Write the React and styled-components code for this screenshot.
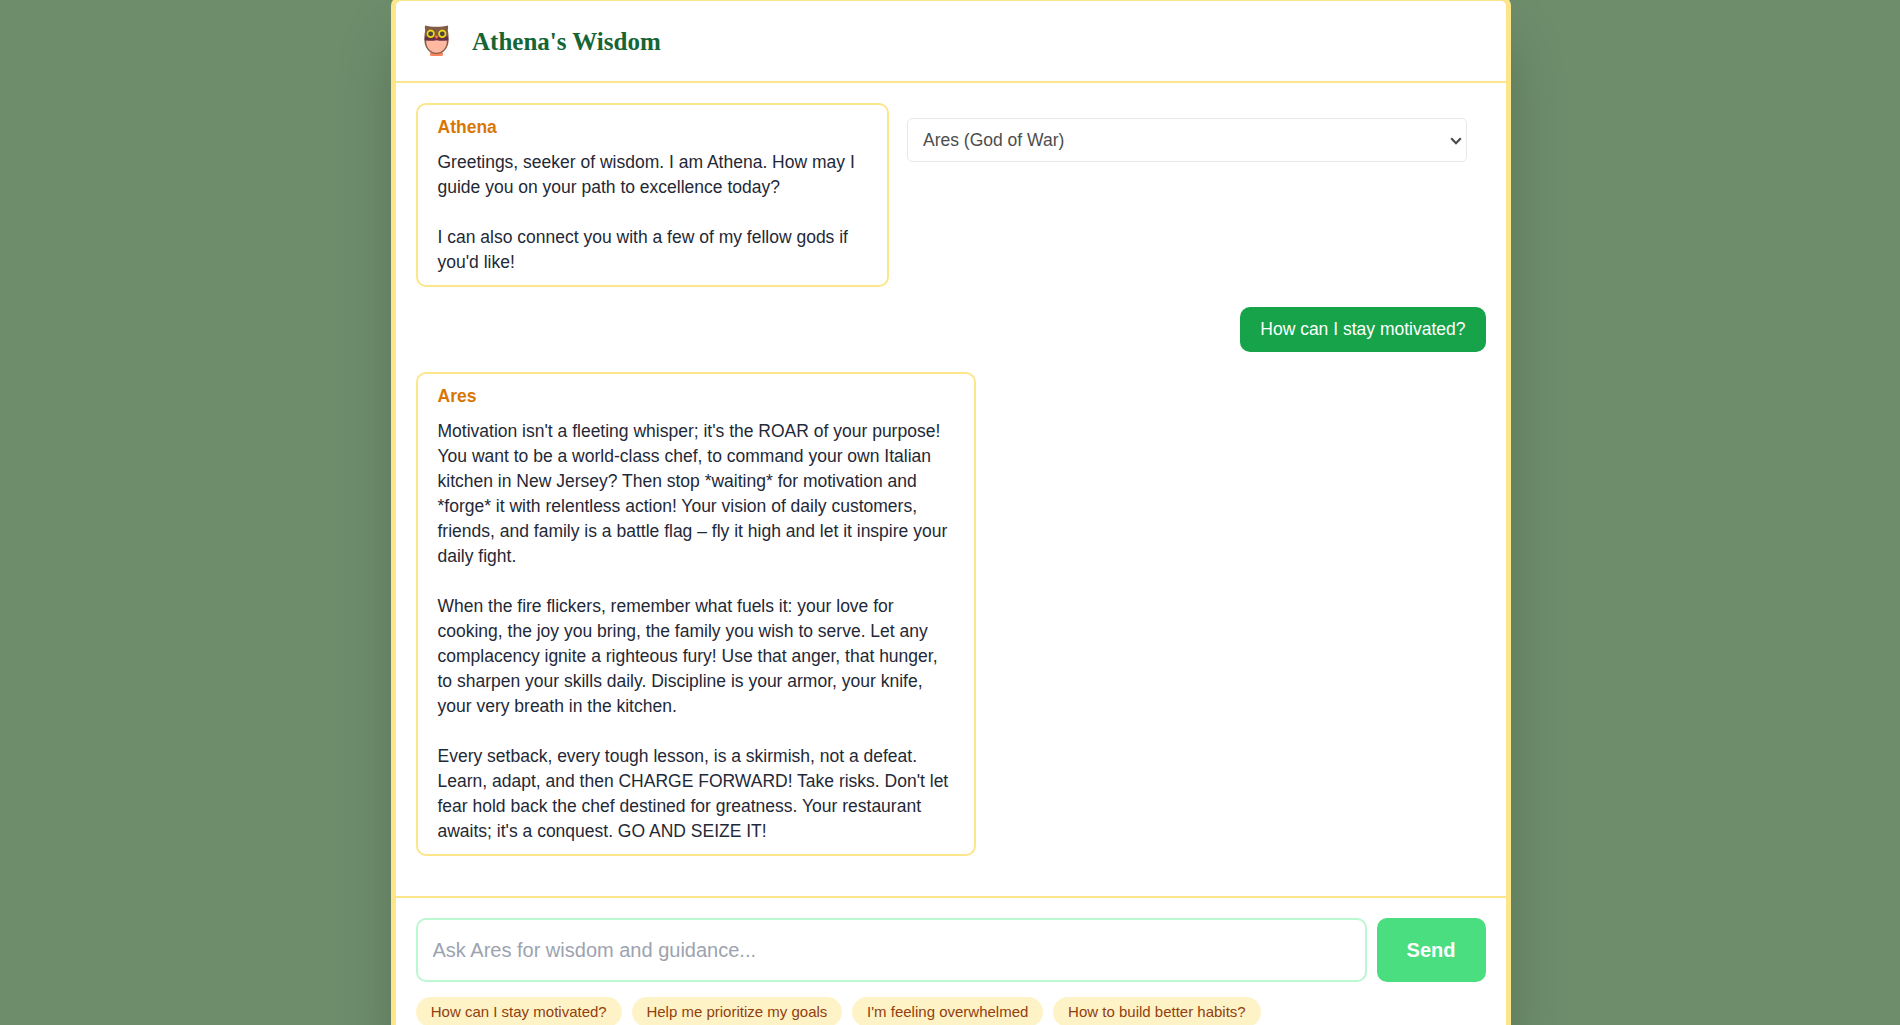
import React, { useState } from 'react';
import styled, { createGlobalStyle } from 'styled-components';

const greeting = `Greetings, seeker of wisdom. I am Athena. How may I guide you on your path to excellence today?

I can also connect you with a few of my fellow gods if you'd like!`;

const aresReply = `Motivation isn't a fleeting whisper; it's the ROAR of your purpose! You want to be a world-class chef, to command your own Italian kitchen in New Jersey? Then stop *waiting* for motivation and *forge* it with relentless action! Your vision of daily customers, friends, and family is a battle flag – fly it high and let it inspire your daily fight.

When the fire flickers, remember what fuels it: your love for cooking, the joy you bring, the family you wish to serve. Let any complacency ignite a righteous fury! Use that anger, that hunger, to sharpen your skills daily. Discipline is your armor, your knife, your very breath in the kitchen.

Every setback, every tough lesson, is a skirmish, not a defeat. Learn, adapt, and then CHARGE FORWARD! Take risks. Don't let fear hold back the chef destined for greatness. Your restaurant awaits; it's a conquest. GO AND SEIZE IT!`;

const suggestions = [
    'How can I stay motivated?',
    'Help me prioritize my goals',
    "I'm feeling overwhelmed",
    'How to build better habits?',
];

function Owl() {
    return (
        <OwlIcon viewBox="0 0 25 32">
            <path d="M6 27.500h13v2a1.500 1.500 0 0 1-1.500 1.500h-10A1.500 1.500 0 0 1 6 29.500z" fill="#ff8560" />
            <path d="M1 .5C4 1.500 8 1.800 12.500 1.800S21 1.500 24 .5c.3 2 0 3.500-.2 5 .8 3 .9 7 .8 10C24.400 23 19.500 29 12.500 29S.6 23 .4 15.500c-.1-3 0-7 .8-10-.2-1.500-.5-3-.2-5z" fill="#845c46" />
            <path d="M1 11.500h23l.3 3.500c-4 2.400-19.600 2.400-23.600 0z" fill="#643048" />
            <path d="M2.200 15.500q5 .8 10.300-.3 5.300 1.100 10.300.3c.3 6.500-3.800 12.300-10.300 12.300S1.900 22 2.200 15.500z" fill="#ffb9a3" />
            <circle cx="6.700" cy="8.800" r="4.600" fill="#5a4139" />
            <circle cx="18.300" cy="8.800" r="4.600" fill="#5a4139" />
            <circle cx="6.700" cy="8.800" r="3.300" fill="#4c4440" stroke="#ecd51b" strokeWidth="1.800" />
            <circle cx="18.300" cy="8.800" r="3.300" fill="#4c4440" stroke="#ecd51b" strokeWidth="1.800" />
            <path d="M10.300 11.500q2.200-1.800 4.400 0L12.500 14z" fill="#ff6a35" />
        </OwlIcon>
    );
}

export default function App() {
    const [god, setGod] = useState('ares');
    const [question, setQuestion] = useState('');

    return (
        <Page>
            <GlobalStyle />
            <ChatContainer>
                <Header>
                    <Owl />
                    <Title>Athena's Wisdom</Title>
                </Header>

                <MessageList>
                    <MessageRow>
                        <GodBubble $width="473px">
                            <GodName>Athena</GodName>
                            <MessageText>{greeting}</MessageText>
                        </GodBubble>
                        <SelectWrap>
                            <GodSelect value={god} onChange={(e) => setGod(e.target.value)}>
                                <option value="ares">Ares (God of War)</option>
                            </GodSelect>
                            <SelectArrow viewBox="0 0 12 8">
                                <path d="M1.200 1.300L6 6.200l4.800-4.900" fill="none" stroke="#4a4a4a" strokeWidth="2.200" />
                            </SelectArrow>
                        </SelectWrap>
                    </MessageRow>
                    <MessageRow $user>
                        <UserBubble>How can I stay motivated?</UserBubble>
                    </MessageRow>
                    <MessageRow>
                        <GodBubble $width="560px">
                            <GodName>Ares</GodName>
                            <MessageText>{aresReply}</MessageText>
                        </GodBubble>
                    </MessageRow>
                </MessageList>

                <Footer>
                    <InputRow>
                        <QuestionInput
                            value={question}
                            onChange={(e) => setQuestion(e.target.value)}
                            placeholder="Ask Ares for wisdom and guidance..."
                        />
                        <SendButton>Send</SendButton>
                    </InputRow>
                    <SuggestionRow>
                        {suggestions.map((text, index) => (
                            <Suggestion key={index} onClick={() => setQuestion(text)}>
                                {text}
                            </Suggestion>
                        ))}
                    </SuggestionRow>
                </Footer>
            </ChatContainer>
        </Page>
    );
}

const GlobalStyle = createGlobalStyle`
    * {
        box-sizing: border-box;
    }
    body {
        margin: 0;
        font-family: Arial, 'Liberation Sans', sans-serif;
    }
    button, input, select {
        font-family: inherit;
    }
`;
const Page = styled.div`
    height: 1025px;
    overflow: hidden;
    padding-left: 2px;
    background-color: #6d8d6b;
`;
const ChatContainer = styled.div`
    display: flex;
    flex-direction: column;
    width: 1120px;
    height: 1056px;
    margin: -4px auto 0;
    background-color: #fff;
    border: 5px solid #fde68a;
    border-radius: 10px;
    box-shadow: 0 31px 62px -15px rgba(0, 0, 0, 0.25);
`;
const Header = styled.div`
    display: flex;
    align-items: center;
    gap: 23px;
    height: 82px;
    padding: 1px 28px 0;
    border-bottom: 2px solid #fde68a;
`;
const OwlIcon = styled.svg`
    width: 25px;
    height: 32px;
    margin-top: -2px;
`;
const Title = styled.h1`
    margin: 1px 0 0;
    font-family: 'Liberation Serif', serif;
    font-size: 25px;
    font-weight: bold;
    color: #166534;
`;
const MessageList = styled.div`
    display: flex;
    flex-direction: column;
    gap: 20px;
    height: 813px;
    padding: 20px;
`;
const MessageRow = styled.div`
    display: flex;
    align-items: flex-start;
    justify-content: ${(props) => (props.$user ? 'flex-end' : 'flex-start')};
`;
const GodBubble = styled.div`
    width: ${(props) => props.$width};
    padding: 10px 19px 10px 19.5px;
    border: 2px solid #fde68a;
    border-radius: 10px;
    font-size: 17.5px;
    line-height: 25px;
`;
const GodName = styled.div`
    margin-bottom: 10px;
    font-weight: bold;
    color: #d97706;
`;
const MessageText = styled.div`
    white-space: pre-wrap;
    color: #1f2937;
`;
const UserBubble = styled.div`
    padding: 10px 20.5px 10px 20px;
    border-radius: 10px;
    font-size: 17.5px;
    line-height: 25px;
    color: #fff;
    background-color: #16a34a;
`;
const SelectWrap = styled.div`
    position: relative;
    width: 560px;
    margin: 15px 0 0 18px;
`;
const GodSelect = styled.select`
    display: block;
    appearance: none;
    width: 100%;
    height: 44px;
    padding: 0 15px;
    border: 1px solid #e5e7eb;
    border-radius: 5px;
    font-size: 17.5px;
    color: #4d4d4d;
    background-color: #fff;
`;
const SelectArrow = styled.svg`
    position: absolute;
    top: 19px;
    right: 5px;
    width: 12px;
    height: 8px;
    pointer-events: none;
`;
const Footer = styled.div`
    padding: 20px;
    border-top: 2px solid #fde68a;
`;
const InputRow = styled.div`
    display: flex;
    gap: 10px;
`;
const QuestionInput = styled.input`
    flex: 1;
    height: 64px;
    padding: 0 14.5px;
    border: 2px solid #bbf7d0;
    border-radius: 10px;
    font-size: 20px;
    outline: none;

    &::placeholder {
        color: #9ca3af;
    }
`;
const SendButton = styled.button`
    width: 109px;
    height: 64px;
    padding: 0 1px 0 0;
    border: none;
    border-radius: 10px;
    font-size: 20px;
    font-weight: bold;
    color: #fff;
    background-color: #4ade80;
`;
const SuggestionRow = styled.div`
    display: flex;
    gap: 10px;
    margin-top: 15px;
`;
const Suggestion = styled.button`
    height: 30px;
    padding: 0 15px 0 14.75px;
    border: none;
    border-radius: 15px;
    font-size: 15px;
    line-height: 20px;
    color: #92400e;
    background-color: #fef3c7;
`;
